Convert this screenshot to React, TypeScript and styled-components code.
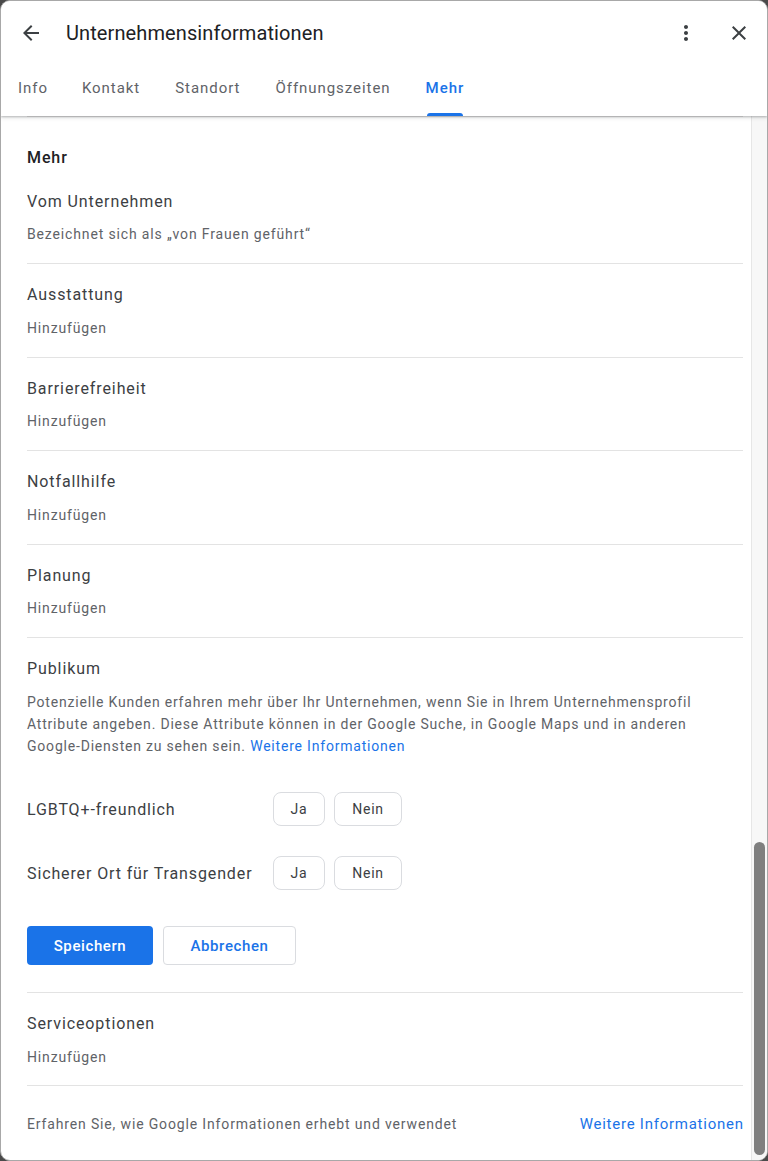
import React from "react";
import styled, { createGlobalStyle } from "styled-components";

const Global = createGlobalStyle`
  html, body { margin: 0; padding: 0; height: 100%; background: #4a4a4a; }
  #root { height: 100%; }
  * { box-sizing: border-box; }
  body { font-family: Roboto, "Noto Sans", Arial, sans-serif; -webkit-font-smoothing: antialiased; }
`;

const Dialog = styled.div`
  height: 100vh;
  background: #fff;
  border: 1px solid #a8a8a8;
  border-radius: 10px;
  overflow: hidden;
  display: flex;
  flex-direction: column;
`;

const Header = styled.header`
  position: relative;
  z-index: 2;
  background: #fff;
  box-shadow: 0 1px 2px rgba(60, 64, 67, 0.3), 0 2px 4px rgba(60, 64, 67, 0.12);
`;

const TitleRow = styled.div`
  height: 63px;
  display: flex;
  align-items: center;
  padding: 0 8px 0 10px;
`;

const IconButton = styled.button<{ $ml?: number }>`
  width: 40px;
  height: 40px;
  border: none;
  background: transparent;
  padding: 0;
  display: flex;
  align-items: center;
  justify-content: center;
  color: #3c4043;
  margin-left: ${(p) => p.$ml ?? 0}px;
  cursor: pointer;
`;

const Title = styled.h1`
  margin: 0 0 0 15px;
  flex: 1;
  font-size: 20px;
  font-weight: 400;
  color: #202124;
  letter-spacing: 0.1px;
`;

const TabBar = styled.nav`
  height: 52px;
  display: flex;
`;

const Tab = styled.div<{ $active?: boolean }>`
  position: relative;
  display: flex;
  align-items: center;
  padding: 0 17.5px 4px 17.5px;
  font-size: 15px;
  letter-spacing: 0.95px;
  color: ${(p) => (p.$active ? "#1a73e8" : "#5f6368")};
  font-weight: ${(p) => (p.$active ? 500 : 400)};
  &::after {
    content: "";
    display: ${(p) => (p.$active ? "block" : "none")};
    position: absolute;
    left: 19px;
    right: 19px;
    bottom: 0;
    height: 3px;
    border-radius: 3px 3px 0 0;
    background: #1a73e8;
  }
  &:first-child { padding-left: 17px; padding-right: 16.5px; }
`;

const BodyRow = styled.div`
  flex: 1;
  display: flex;
  min-height: 0;
`;

const Content = styled.main`
  flex: 1;
  padding: 0 8px 0 26px;
  overflow: hidden;
`;

const Track = styled.div`
  width: 16px;
  background: #f7f7f7;
  border-left: 1px solid #e6e6e6;
  padding: 0 2px 0 2px;
`;

const Thumb = styled.div`
  width: 11px;
  height: 313px;
  background: #7f7f7f;
  border-radius: 6px;
`;

const Divider = styled.hr`
  margin: 0;
  border: none;
  border-top: 1px solid #e3e3e3;
`;

const Heading = styled.h2`
  margin: 29px 0 0;
  font-size: 16px;
  line-height: 24px;
  font-weight: 500;
  letter-spacing: 0.9px;
  color: #202124;
`;

const Section = styled.section<{ $pt?: number; $pb?: number }>`
  padding: ${(p) => p.$pt ?? 20}px 0 ${(p) => p.$pb ?? 19}px;
`;

const SectionTitle = styled.div`
  font-size: 16px;
  line-height: 24px;
  letter-spacing: 0.9px;
  color: #3c4043;
`;

const SectionSub = styled.div`
  margin-top: 10.5px;
  font-size: 14px;
  line-height: 20px;
  letter-spacing: 0.85px;
  color: #5f6368;
`;

const Paragraph = styled.p`
  margin: 10px 0 0;
  font-size: 14px;
  line-height: 22px;
  letter-spacing: 0.8px;
  color: #5f6368;
`;

const Link = styled.a<{ $size?: number }>`
  color: #1a73e8;
  text-decoration: none;
  font-size: ${(p) => p.$size ?? 14}px;
`;

const AttrRow = styled.div<{ $mt: number }>`
  display: flex;
  align-items: center;
  margin-top: ${(p) => p.$mt}px;
`;

const AttrLabel = styled.div`
  width: 246px;
  font-size: 16px;
  letter-spacing: 0.88px;
  color: #3c4043;
`;

const Choice = styled.button<{ $w: number }>`
  width: ${(p) => p.$w}px;
  height: 34px;
  margin-right: 9px;
  border: 1px solid #dadce0;
  border-radius: 8px;
  background: #fff;
  font-family: inherit;
  font-size: 14px;
  font-weight: 400;
  letter-spacing: 0.8px;
  color: #3c4043;
  padding: 0;
`;

const Actions = styled.div`
  display: flex;
  gap: 10px;
  margin-top: 36px;
`;

const PrimaryButton = styled.button`
  width: 126px;
  height: 39px;
  border: none;
  border-radius: 4px;
  background: #1a73e8;
  color: #fff;
  font-family: inherit;
  font-size: 15px;
  font-weight: 500;
  letter-spacing: 0.6px;
  padding: 0;
`;

const SecondaryButton = styled.button`
  width: 133px;
  height: 39px;
  border: 1px solid #dadce0;
  border-radius: 4px;
  background: #fff;
  color: #1a73e8;
  font-family: inherit;
  font-size: 15px;
  font-weight: 500;
  letter-spacing: 0.6px;
  padding: 0;
`;

const Footer = styled.div`
  display: flex;
  justify-content: space-between;
  align-items: center;
  padding-top: 28px;
  font-size: 14px;
  line-height: 20px;
  letter-spacing: 0.85px;
  color: #5f6368;
`;

const FooterLink = styled(Link)`
  letter-spacing: 0.75px;
  margin-right: -0.75px;
`;

const ArrowBack = () => (
  <svg width="24" height="24" viewBox="0 0 24 24" fill="currentColor">
    <path d="M20 11H7.83l5.59-5.59L12 4l-8 8 8 8 1.41-1.41L7.83 13H20v-2z" />
  </svg>
);
const MoreVert = () => (
  <svg width="24" height="24" viewBox="0 0 24 24" fill="currentColor">
    <path d="M12 8c1.1 0 2-.9 2-2s-.9-2-2-2-2 .9-2 2 .9 2 2 2zm0 2c-1.1 0-2 .9-2 2s.9 2 2 2 2-.9 2-2-.9-2-2-2zm0 6c-1.1 0-2 .9-2 2s.9 2 2 2 2-.9 2-2-.9-2-2-2z" />
  </svg>
);
const Close = () => (
  <svg width="24" height="24" viewBox="0 0 24 24" fill="currentColor">
    <path d="M19 6.41L17.59 5 12 10.59 6.41 5 5 6.41 10.59 12 5 17.59 6.41 19 12 13.41 17.59 19 19 17.59 13.41 12z" />
  </svg>
);

const tabs = ["Info", "Kontakt", "Standort", "Öffnungszeiten", "Mehr"];
const simple = ["Ausstattung", "Barrierefreiheit", "Notfallhilfe", "Planung"];

export default function App() {
  return (
    <>
      <Global />
      <Dialog>
        <Header>
          <TitleRow>
            <IconButton aria-label="Zurück"><ArrowBack /></IconButton>
            <Title>Unternehmensinformationen</Title>
            <IconButton aria-label="Mehr"><MoreVert /></IconButton>
            <IconButton aria-label="Schließen" $ml={13}><Close /></IconButton>
          </TitleRow>
          <TabBar>
            {tabs.map((t) => (
              <Tab key={t} $active={t === "Mehr"}>{t}</Tab>
            ))}
          </TabBar>
        </Header>
        <BodyRow>
          <Content>
            <Divider />
            <Heading>Mehr</Heading>
            <Section $pt={19.5}>
              <SectionTitle>Vom Unternehmen</SectionTitle>
              <SectionSub>Bezeichnet sich als „von Frauen geführt“</SectionSub>
            </Section>
            {simple.map((s) => (
              <React.Fragment key={s}>
                <Divider />
                <Section $pt={19}>
                  <SectionTitle>{s}</SectionTitle>
                  <SectionSub>Hinzufügen</SectionSub>
                </Section>
              </React.Fragment>
            ))}
            <Divider />
            <Section $pt={18.5} $pb={27}>
              <SectionTitle>Publikum</SectionTitle>
              <Paragraph>
                Potenzielle Kunden erfahren mehr über Ihr Unternehmen, wenn Sie in Ihrem Unternehmensprofil
                Attribute angeben. Diese Attribute können in der Google Suche, in Google Maps und in anderen
                Google-Diensten zu sehen sein. <Link href="#">Weitere Informationen</Link>
              </Paragraph>
              <AttrRow $mt={35.5}>
                <AttrLabel>LGBTQ+-freundlich</AttrLabel>
                <Choice $w={52}>Ja</Choice>
                <Choice $w={68}>Nein</Choice>
              </AttrRow>
              <AttrRow $mt={30}>
                <AttrLabel>Sicherer Ort für Transgender</AttrLabel>
                <Choice $w={52}>Ja</Choice>
                <Choice $w={68}>Nein</Choice>
              </AttrRow>
              <Actions>
                <PrimaryButton>Speichern</PrimaryButton>
                <SecondaryButton>Abbrechen</SecondaryButton>
              </Actions>
            </Section>
            <Divider />
            <Section $pt={19} $pb={18}>
              <SectionTitle>Serviceoptionen</SectionTitle>
              <SectionSub>Hinzufügen</SectionSub>
            </Section>
            <Divider />
            <Footer>
              <span>Erfahren Sie, wie Google Informationen erhebt und verwendet</span>
              <FooterLink href="#" $size={15}>Weitere Informationen</FooterLink>
            </Footer>
          </Content>
          <Track>
            <Thumb style={{ marginTop: 726 }} />
          </Track>
        </BodyRow>
      </Dialog>
    </>
  );
}
